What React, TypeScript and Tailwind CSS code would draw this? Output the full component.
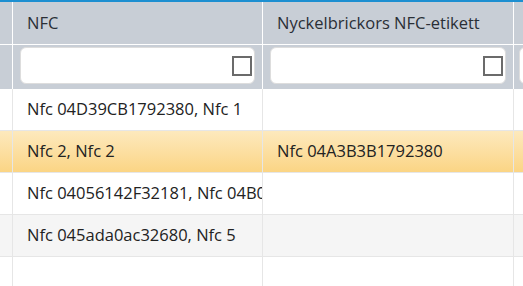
import React from 'react';

type Row = { nfc: string; tag: string; bg: string };

const rows: Row[] = [
  { nfc: 'Nfc 04D39CB1792380, Nfc 1', tag: '', bg: 'bg-white' },
  { nfc: 'Nfc 2, Nfc 2', tag: 'Nfc 04A3B3B1792380', bg: 'bg-gradient-to-b from-[#fde9bd] to-[#fbd584]' },
  { nfc: 'Nfc 04056142F32181, Nfc 04B0C2D1792380, Nfc 3', tag: '', bg: 'bg-white' },
  { nfc: 'Nfc 045ada0ac32680, Nfc 5', tag: '', bg: 'bg-[#f5f5f5]' },
  { nfc: '', tag: '', bg: 'bg-white' },
];

function FilterBox({ last }: { last?: boolean }) {
  return (
    <div
      className={`flex h-[37px] items-center justify-end rounded-[6px] border border-[#dddddd] bg-white pr-[2px] ${
        last ? 'ml-[5px] w-[40px]' : 'mx-[7px]'
      }`}
    >
      {!last && <div className="h-[20px] w-[20px] border-2 border-[#6b6b6b] bg-white" />}
    </div>
  );
}

export default function App() {
  return (
    <div
      className="h-[286px] w-[523px] overflow-hidden bg-white text-[16.5px] text-[#222]"
      style={{ fontFamily: '"Open Sans", "Noto Sans", sans-serif' }}
    >
      <div className="h-[2px] bg-[#1d8fd1]" />
      {/* header */}
      <div className="bg-[#c8ced6]">
        <div className="flex h-[43px] border-b border-white">
          <div className="w-[13px] shrink-0 border-r border-white" />
          <div className="flex w-[250px] shrink-0 items-center border-r border-white pl-[14px] text-[#2a2f36]">NFC</div>
          <div className="flex w-[251px] shrink-0 items-center overflow-hidden whitespace-nowrap border-r border-white pl-[14px] text-[#2a2f36]">
            Nyckelbrickors NFC-etikett
          </div>
          <div className="flex-1" />
        </div>
        <div className="flex h-[44px]">
          <div className="w-[13px] shrink-0 border-r border-white" />
          <div className="w-[250px] shrink-0 border-r border-white pt-[2px]">
            <FilterBox />
          </div>
          <div className="w-[251px] shrink-0 border-r border-white pt-[2px]">
            <FilterBox />
          </div>
          <div className="flex-1 overflow-hidden pt-[2px]">
            <FilterBox last />
          </div>
        </div>
      </div>
      {/* body */}
      {rows.map((r, i) => (
        <div key={i} className={`flex h-[42px] border-b border-[#e6e6e6] ${r.bg}`}>
          <div className="w-[13px] shrink-0 border-r border-[#e6e6e6]" />
          <div className="flex w-[250px] shrink-0 items-center overflow-hidden whitespace-nowrap border-r border-[#e6e6e6] pl-[14px]">
            {r.nfc}
          </div>
          <div className="flex w-[251px] shrink-0 items-center overflow-hidden whitespace-nowrap border-r border-[#e6e6e6] pl-[14px]">
            {r.tag}
          </div>
          <div className="flex-1" />
        </div>
      ))}
    </div>
  );
}
